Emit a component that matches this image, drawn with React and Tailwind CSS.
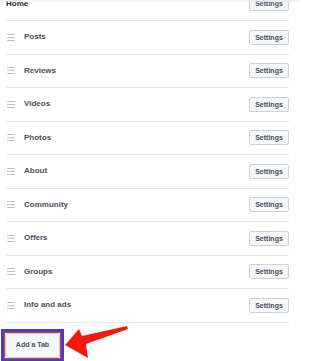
import React from "react";

const tabs = ["Posts", "Reviews", "Videos", "Photos", "About", "Community", "Offers", "Groups", "Info and ads"];

function Settings() {
  return (
    <button className="h-[15px] w-[40px] flex items-center justify-center rounded-[2px] border border-[#ced0d4] bg-[#f6f7f9] text-[7px] font-bold text-[#4b4f56] leading-none">
      Settings
    </button>
  );
}

function Grip() {
  return (
    <div className="flex flex-col gap-[2px] w-[8px] ml-[1px] mr-[9px]">
      <div className="h-[1px] bg-[#bec3c9]" />
      <div className="h-[1px] bg-[#bec3c9]" />
      <div className="h-[1px] bg-[#bec3c9]" />
    </div>
  );
}

export default function App() {
  return (
    <div
      className="relative w-[300px] h-[361px] overflow-hidden bg-white"
      style={{ fontFamily: '"Liberation Sans", Arial, sans-serif' }}
    >
      <div className="absolute top-0 left-0 right-0 h-[3px] bg-gradient-to-b from-[#e9ebee] to-transparent z-10" />
      <div className="ml-[6px] w-[283px] -mt-[12.5px]">
        <div className="h-[33.5px] flex items-center justify-between border-b border-[#e5e6e9]">
          <span className="text-[8px] font-bold text-[#1d2129]">Home</span>
          <Settings />
        </div>
        {tabs.map((t) => (
          <div key={t} className="h-[33.5px] flex items-center border-b border-[#e5e6e9]">
            <Grip />
            <span className="text-[8px] font-bold text-[#4b4f56] flex-1">{t}</span>
            <Settings />
          </div>
        ))}
      </div>
      <div className="mt-[6px] ml-[1px] w-[63px] border-[3px] border-[#4b3cc8]">
        <div className="border border-[#e8362f]">
          <div className="h-[25px] flex items-center justify-center rounded-[2px] border border-[#ced0d4] bg-[#f6f7f9] text-[7px] font-bold text-[#4b4f56]">
            Add a Tab
          </div>
        </div>
      </div>
      <svg className="absolute left-[63px] top-[326px]" width="68" height="36" viewBox="0 0 68 36">
        <polygon
          points="2,19 16,3 19,10 64,0 65,3 23,18 25,32"
          fill="#f2190f"
        />
      </svg>
    </div>
  );
}
